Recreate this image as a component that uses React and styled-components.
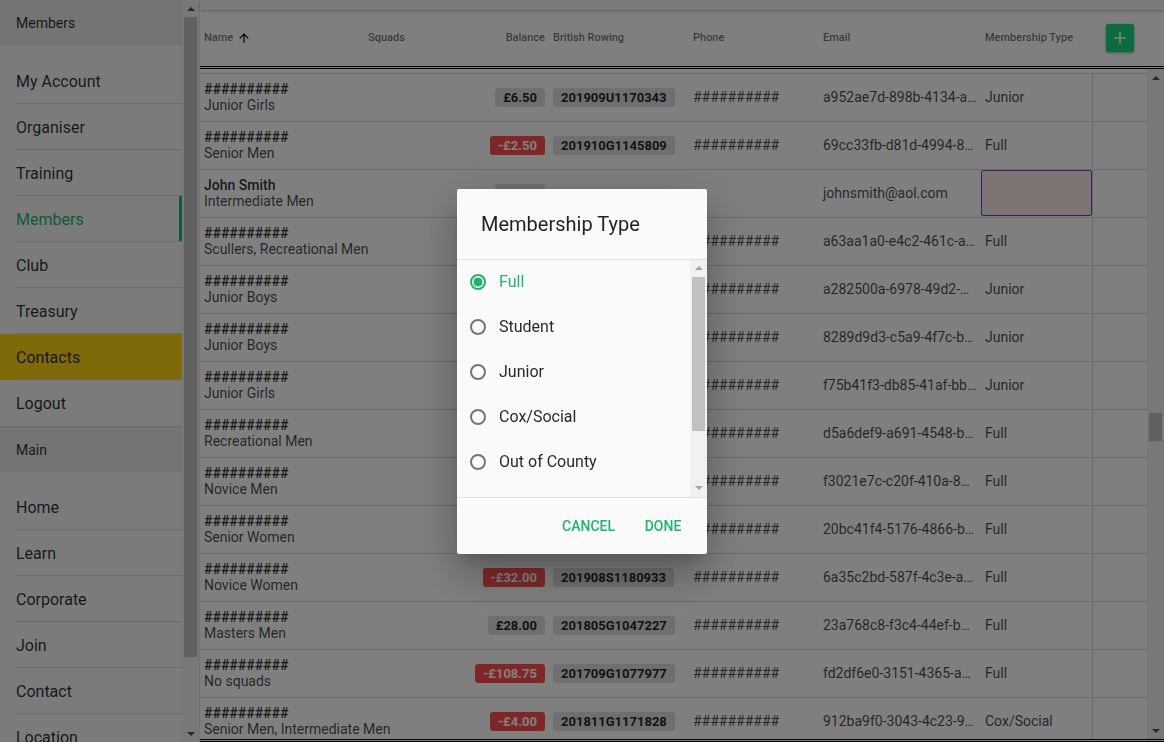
import React from "react";
import styled, { createGlobalStyle } from "styled-components";

const GREEN = "#1eb46f";
const COLS = "164px 104px 81px 140px 130px 162px 111px 55px";
const HASH = "##########";

const GlobalStyle = createGlobalStyle`
  html, body {
    margin: 0;
    padding: 0;
    height: 100%;
  }
  body {
    font-family: Roboto, "Noto Sans", Arial, sans-serif;
    background: #fff;
    overflow: hidden;
  }
  #root {
    height: 100%;
  }
`;

const Page = styled.div`
  display: flex;
  width: 1164px;
  height: 742px;
  overflow: hidden;
`;

/* ---------- sidebar ---------- */

const Sidebar = styled.aside`
  display: flex;
  flex-shrink: 0;
  width: 200px;
  box-sizing: border-box;
  border-right: 1px solid #e4e4e4;
  background: #f6f6f6;
`;

const Nav = styled.nav`
  display: flex;
  flex-direction: column;
  width: 182px;
  overflow: hidden;
`;

const NavHeader = styled.div`
  display: flex;
  align-items: center;
  flex-shrink: 0;
  height: 46px;
  padding-left: 16px;
  margin-bottom: 12px;
  background: #e8e8e8;
  border-top: ${(p) => (p.$ruled ? "1px solid #d2d2d2" : "none")};
  box-sizing: border-box;
  font-size: 14px;
  color: rgba(0, 0, 0, 0.82);
`;

const NavItem = styled.div`
  display: flex;
  flex-shrink: 0;
  height: 46px;
  background: ${(p) => (p.$highlight ? "#ffd414" : "transparent")};
  box-shadow: ${(p) => (p.$active ? `inset -3px 0 0 ${GREEN}` : "none")};
`;

const NavLabel = styled.div`
  display: flex;
  align-items: center;
  flex: 1;
  padding-top: 1px;
  margin-left: 16px;
  border-bottom: ${(p) => (p.$last ? "none" : "1px solid #d6d6d6")};
  font-size: 16px;
  color: ${(p) => (p.$active ? GREEN : "rgba(0, 0, 0, 0.82)")};
`;

/* ---------- scrollbars ---------- */

const Track = styled.div`
  display: flex;
  flex-direction: column;
  flex-shrink: 0;
  width: 17px;
  background: #f1f1f1;
`;

const Arrow = styled.div`
  display: flex;
  align-items: center;
  justify-content: center;
  height: 17px;
  flex-shrink: 0;
  &::before {
    content: "";
    border-left: 4px solid transparent;
    border-right: 4px solid transparent;
    ${(p) =>
      p.$down
        ? `border-top: 4px solid ${p.$color};`
        : `border-bottom: 4px solid ${p.$color};`}
  }
`;

const Thumb = styled.div`
  flex-shrink: 0;
  margin: ${(p) => p.$offset}px 2px 0;
  height: ${(p) => p.$size}px;
  background: #c1c1c1;
`;

const Fill = styled.div`
  flex: 1;
`;

const ScrollBar = ({ offset, size, arrow = "#505050" }) => (
  <Track>
    <Arrow $color={arrow} />
    <Thumb $offset={offset} $size={size} />
    <Fill />
    <Arrow $down $color={arrow} />
  </Track>
);

/* ---------- table ---------- */

const Main = styled.main`
  display: flex;
  flex-direction: column;
  flex: 1;
  min-width: 0;
  background: #fff;
`;

const TopBar = styled.div`
  flex-shrink: 0;
  height: 10px;
  background: #f4f4f4;
  box-shadow: 0 1px 3px rgba(0, 0, 0, 0.25);
  position: relative;
  z-index: 1;
`;

const HeaderRow = styled.div`
  display: grid;
  grid-template-columns: ${COLS} 17px;
  align-items: center;
  flex-shrink: 0;
  height: 59px;
  padding-bottom: 1px;
  box-sizing: border-box;
  border-bottom: 3px double #000;
`;

const HeaderCell = styled.div`
  display: flex;
  align-items: center;
  justify-content: ${(p) =>
    p.$align === "right" ? "flex-end" : p.$align === "center" ? "center" : "flex-start"};
  gap: 4px;
  padding: 0 4px;
  font-size: 11px;
  font-weight: 500;
  color: rgba(0, 0, 0, 0.56);
  white-space: nowrap;
`;

const AddButton = styled.button`
  display: flex;
  align-items: center;
  justify-content: center;
  width: 28px;
  height: 28px;
  padding: 0;
  border: none;
  border-radius: 2px;
  background: #17d97f;
  box-shadow: 0 1px 3px rgba(0, 0, 0, 0.35);
`;

const Body = styled.div`
  display: flex;
  flex: 1;
  min-height: 0;
`;

const Rows = styled.div`
  flex: 1;
  overflow: hidden;
  padding-top: 4px;
`;

const Row = styled.div`
  display: grid;
  grid-template-columns: ${COLS};
  align-items: center;
  height: 48px;
  padding-bottom: 1px;
  box-sizing: border-box;
  border-top: 1px solid #d6d6d6;
`;

const Cell = styled.div`
  min-width: 0;
  padding: 0 4px;
  font-size: 14px;
  color: rgba(0, 0, 0, 0.72);
  white-space: nowrap;
  overflow: hidden;
  text-overflow: ellipsis;
  text-align: ${(p) => p.$align || "left"};
`;

const NameCell = styled(Cell)`
  overflow: visible;
`;

const NameTitle = styled.div`
  font-weight: 500;
  line-height: 16px;
  color: rgba(0, 0, 0, 0.82);
`;

const NameSub = styled.div`
  line-height: 16px;
`;

const Chip = styled.span`
  display: inline-block;
  padding: 0 8px;
  border-radius: 3px;
  font-size: 13px;
  font-weight: 700;
  line-height: 19px;
  background: ${(p) => (p.$neg ? "#ff4f4f" : "#dedede")};
  color: ${(p) => (p.$neg ? "#fff" : "rgba(0, 0, 0, 0.85)")};
`;

const ActionCell = styled.div`
  align-self: stretch;
  border-left: 1px solid #d6d6d6;
`;

const TypeBox = styled.div`
  align-self: stretch;
  border: 1px solid #4a4ad4;
  border-radius: 2px;
  background: #ffe8e8;
`;

const Footer = styled.div`
  flex-shrink: 0;
  height: 3px;
  border-top: 3px double #000;
  box-sizing: border-box;
`;

/* ---------- dialog ---------- */

const Backdrop = styled.div`
  position: fixed;
  inset: 0;
  z-index: 10;
  display: flex;
  align-items: center;
  justify-content: center;
  background: rgba(0, 0, 0, 0.5);
`;

const Dialog = styled.div`
  display: flex;
  flex-direction: column;
  width: 250px;
  height: 365px;
  background: #fafafa;
  border-radius: 2px;
  box-shadow: 0 11px 15px -7px rgba(0, 0, 0, 0.2), 0 24px 38px 3px rgba(0, 0, 0, 0.14),
    0 9px 46px 8px rgba(0, 0, 0, 0.12);
`;

const DialogTitle = styled.h2`
  display: flex;
  align-items: center;
  flex-shrink: 0;
  height: 70px;
  margin: 0;
  padding: 0 24px;
  border-bottom: 1px solid #e0e0e0;
  font-size: 20px;
  font-weight: 400;
  color: rgba(0, 0, 0, 0.87);
`;

const DialogBody = styled.div`
  display: flex;
  height: 237px;
  flex-shrink: 0;
`;

const OptionList = styled.div`
  flex: 1;
  overflow: hidden;
`;

const Option = styled.label`
  display: flex;
  align-items: center;
  height: 45px;
  padding: 0 0 1px 11px;
  box-sizing: border-box;
  font-size: 16px;
  color: ${(p) => (p.$checked ? GREEN : "rgba(0, 0, 0, 0.85)")};
`;

const Radio = styled.span`
  display: flex;
  align-items: center;
  justify-content: center;
  width: 20px;
  height: 20px;
  margin-right: 11px;
  &::before {
    content: "";
    width: 16px;
    height: 16px;
    box-sizing: border-box;
    border-radius: 50%;
    border: 2px solid ${(p) => (p.$checked ? GREEN : "#757575")};
    background: ${(p) =>
      p.$checked ? `radial-gradient(circle, ${GREEN} 0 4.2px, transparent 4.7px)` : "none"};
  }
`;

const DialogActions = styled.div`
  display: flex;
  align-items: center;
  justify-content: flex-end;
  flex: 1;
  padding-right: 12px;
  border-top: 1px solid #e0e0e0;
`;

const TextButton = styled.button`
  min-width: 64px;
  height: 36px;
  margin-left: 8px;
  padding: 0 8px;
  border: none;
  background: none;
  font-family: inherit;
  font-size: 14px;
  font-weight: 500;
  color: ${GREEN};
`;

/* ---------- data ---------- */

const nav1 = ["My Account", "Organiser", "Training", "Members", "Club", "Treasury", "Contacts", "Logout"];
const nav2 = ["Home", "Learn", "Corporate", "Join", "Contact", "Location"];

const members = [
  { name: HASH, squads: "Junior Girls", bal: "£6.50", br: "201909U1170343", phone: HASH, email: "a952ae7d-898b-4134-a…", type: "Junior" },
  { name: HASH, squads: "Senior Men", bal: "-£2.50", neg: true, br: "201910G1145809", phone: HASH, email: "69cc33fb-d81d-4994-8…", type: "Full" },
  { name: "John Smith", squads: "Intermediate Men", bal: "£0.00", email: "johnsmith@aol.com", editing: true },
  { name: HASH, squads: "Scullers, Recreational Men", bal: "£0.00", br: "201810G1100211", phone: HASH, email: "a63aa1a0-e4c2-461c-a…", type: "Full" },
  { name: HASH, squads: "Junior Boys", bal: "£0.00", br: "201909U1170398", phone: HASH, email: "a282500a-6978-49d2-…", type: "Junior" },
  { name: HASH, squads: "Junior Boys", bal: "£0.00", br: "201909U1170402", phone: HASH, email: "8289d9d3-c5a9-4f7c-b…", type: "Junior" },
  { name: HASH, squads: "Junior Girls", bal: "£0.00", br: "201909U1170377", phone: HASH, email: "f75b41f3-db85-41af-bb…", type: "Junior" },
  { name: HASH, squads: "Recreational Men", bal: "£0.00", br: "201807G1050122", phone: HASH, email: "d5a6def9-a691-4548-b…", type: "Full" },
  { name: HASH, squads: "Novice Men", bal: "£0.00", br: "201908S1180871", phone: HASH, email: "f3021e7c-c20f-410a-8…", type: "Full" },
  { name: HASH, squads: "Senior Women", bal: "£0.00", br: "201806G1049930", phone: HASH, email: "20bc41f4-5176-4866-b…", type: "Full" },
  { name: HASH, squads: "Novice Women", bal: "-£32.00", neg: true, br: "201908S1180933", phone: HASH, email: "6a35c2bd-587f-4c3e-a…", type: "Full" },
  { name: HASH, squads: "Masters Men", bal: "£28.00", br: "201805G1047227", phone: HASH, email: "23a768c8-f3c4-44ef-b…", type: "Full" },
  { name: HASH, squads: "No squads", bal: "-£108.75", neg: true, br: "201709G1077977", phone: HASH, email: "fd2df6e0-3151-4365-a…", type: "Full" },
  { name: HASH, squads: "Senior Men, Intermediate Men", bal: "-£4.00", neg: true, br: "201811G1171828", phone: HASH, email: "912ba9f0-3043-4c23-9…", type: "Cox/Social" },
];

const types = ["Full", "Student", "Junior", "Cox/Social", "Out of County", "Honorary", "Life", "Non-Rowing"];

const SortIcon = () => (
  <svg width="14" height="14" viewBox="0 0 24 24">
    <path fill="#000" d="M4 12l1.41 1.41L11 7.83V20h2V7.83l5.58 5.59L20 12l-8-8-8 8z" />
  </svg>
);

const PlusIcon = () => (
  <svg width="20" height="20" viewBox="0 0 24 24">
    <path fill="#fff" d="M19 13h-6v6h-2v-6H5v-2h6V5h2v6h6v2z" />
  </svg>
);

const App = () => {
  return (
    <Page>
      <GlobalStyle />
      <Sidebar>
        <Nav>
          <NavHeader>Members</NavHeader>
          {nav1.map((item, i) => (
            <NavItem key={item} $active={item === "Members"} $highlight={item === "Contacts"}>
              <NavLabel $active={item === "Members"} $last={i === nav1.length - 1}>
                {item}
              </NavLabel>
            </NavItem>
          ))}
          <NavHeader $ruled>Main</NavHeader>
          {nav2.map((item) => (
            <NavItem key={item}>
              <NavLabel>{item}</NavLabel>
            </NavItem>
          ))}
        </Nav>
        <ScrollBar offset={0} size={640} />
      </Sidebar>

      <Main>
        <TopBar />
        <HeaderRow>
          <HeaderCell>
            Name <SortIcon />
          </HeaderCell>
          <HeaderCell>Squads</HeaderCell>
          <HeaderCell $align="right">Balance</HeaderCell>
          <HeaderCell>British Rowing</HeaderCell>
          <HeaderCell>Phone</HeaderCell>
          <HeaderCell>Email</HeaderCell>
          <HeaderCell>Membership Type</HeaderCell>
          <HeaderCell $align="center">
            <AddButton>
              <PlusIcon />
            </AddButton>
          </HeaderCell>
          <div />
        </HeaderRow>
        <Body>
          <Rows>
            {members.map((m, i) => (
              <Row key={i}>
                <NameCell>
                  <NameTitle>{m.name}</NameTitle>
                  <NameSub>{m.squads}</NameSub>
                </NameCell>
                <Cell />
                <Cell $align="right">{m.bal && <Chip $neg={m.neg}>{m.bal}</Chip>}</Cell>
                <Cell>{m.br && <Chip>{m.br}</Chip>}</Cell>
                <Cell>{m.phone}</Cell>
                <Cell>{m.email}</Cell>
                {m.editing ? <TypeBox /> : <Cell>{m.type}</Cell>}
                <ActionCell />
              </Row>
            ))}
          </Rows>
          <ScrollBar offset={327} size={28} />
        </Body>
        <Footer />
      </Main>

      <Backdrop>
        <Dialog>
          <DialogTitle>Membership Type</DialogTitle>
          <DialogBody>
            <OptionList>
              {types.map((t) => (
                <Option key={t} $checked={t === "Full"}>
                  <Radio $checked={t === "Full"} />
                  {t}
                </Option>
              ))}
            </OptionList>
            <ScrollBar offset={0} size={154} arrow="#a3a3a3" />
          </DialogBody>
          <DialogActions>
            <TextButton>CANCEL</TextButton>
            <TextButton>DONE</TextButton>
          </DialogActions>
        </Dialog>
      </Backdrop>
    </Page>
  );
};

export default App;
